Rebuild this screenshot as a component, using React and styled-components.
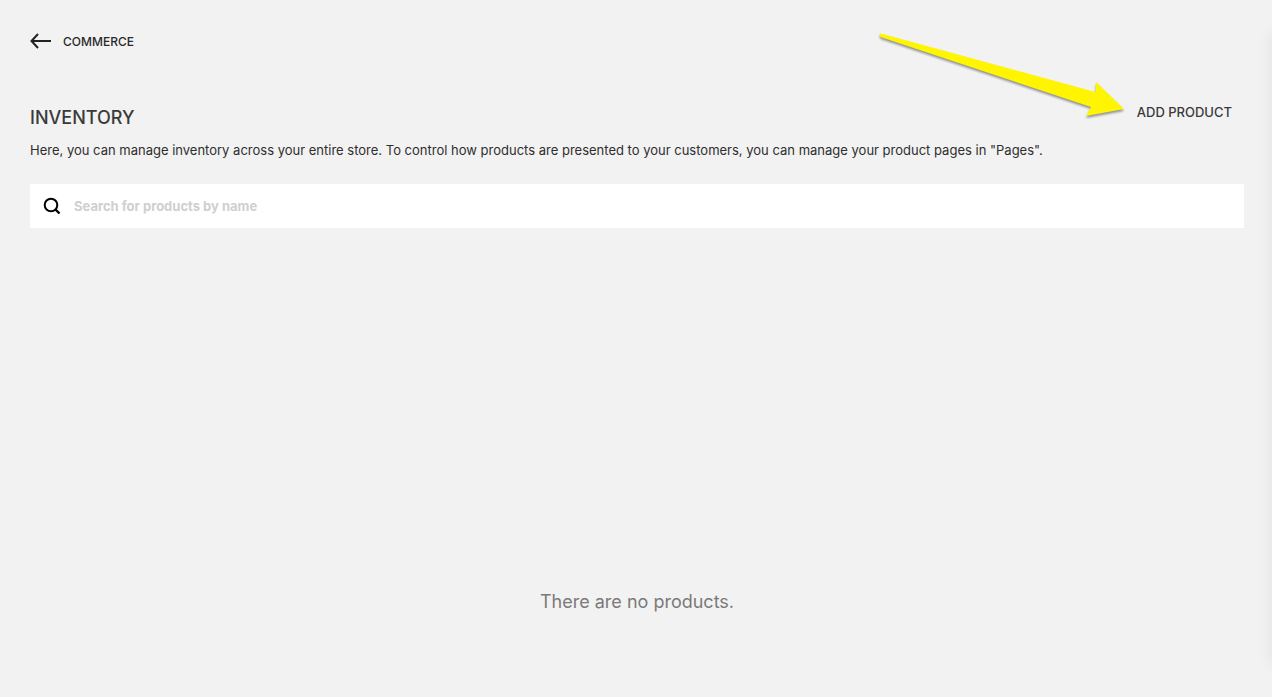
import React from "react";
import styled, { createGlobalStyle } from "styled-components";

const GlobalStyle = createGlobalStyle`
  *, *::before, *::after { box-sizing: border-box; }
  body {
    margin: 0;
    background: #f2f2f2;
    color: #3a3a3a;
    font-family: Inter, "Liberation Sans", sans-serif;
  }
`;

const Page = styled.div`
  position: relative;
  display: flex;
  flex-direction: column;
  min-height: 100vh;
  padding: 30px 28px 0 30px;
  overflow: hidden;
`;

const EdgeShadow = styled.div`
  position: absolute;
  top: 32px;
  bottom: 32px;
  left: 100%;
  width: 40px;
  box-shadow: 0 0 16px rgba(0, 0, 0, 0.08);
`;

const BackLink = styled.a`
  display: inline-flex;
  align-items: center;
  align-self: flex-start;
  gap: 11px;
  height: 22px;
  color: #2a2a2a;
  font-size: 12px;
  font-weight: 500;
  text-decoration: none;
  text-transform: uppercase;
`;

const Header = styled.header`
  position: relative;
  display: flex;
  align-items: flex-start;
  justify-content: space-between;
  margin-top: 48px;
`;

const Title = styled.h1`
  margin: 0;
  padding-top: 6px;
  font-size: 18px;
  line-height: 24px;
  font-weight: 500;
  text-transform: uppercase;
`;

const AddButton = styled.button`
  height: 24px;
  padding: 0 12px;
  border: 0;
  background: none;
  color: inherit;
  font: inherit;
  font-size: 13px;
  font-weight: 500;
  text-transform: uppercase;
  cursor: pointer;
`;

const Pointer = styled.svg`
  position: absolute;
  top: -71px;
  right: 120px;
  pointer-events: none;
  filter: drop-shadow(0 2px 1px rgba(0, 0, 0, 0.4));
`;

const Description = styled.p`
  margin: 10px 0 0;
  color: #2e2e2e;
  font-size: 13px;
  line-height: 20px;
`;

const SearchBar = styled.label`
  display: flex;
  align-items: center;
  gap: 12px;
  height: 44px;
  margin-top: 24px;
  padding: 0 13px;
  background: #fff;
`;

const SearchInput = styled.input`
  flex: 1;
  min-width: 0;
  height: 100%;
  padding: 0;
  border: 0;
  outline: 0;
  background: none;
  color: #3a3a3a;
  font: inherit;
  font-size: 13px;
  font-weight: 700;
  &::placeholder { color: #cfcfcf; opacity: 1; }
`;

const EmptyState = styled.p`
  margin: 0;
  padding: 362px 0 80px;
  color: #7a7a7a;
  font-size: 18px;
  line-height: 24px;
  text-align: center;
`;

export default function App() {
  return (
    <Page>
      <GlobalStyle />
      <BackLink href="#commerce">
        <svg width="22" height="16" viewBox="0 0 22 16" fill="none" stroke="#222" strokeWidth="2" aria-hidden="true">
          <path d="M21 8H1.5M8 1L1.5 8L8 15" />
        </svg>
        Commerce
      </BackLink>
      <main>
        <Header>
          <Title>Inventory</Title>
          <AddButton type="button">Add product</AddButton>
          <Pointer width="256" height="96" viewBox="0 0 256 96" aria-hidden="true">
            <path d="M11.5 5.5Q11 4 13 4.5L227.5 63L228 53L256 80L218 87L223 78L12.5 8Z" fill="#fff500" />
          </Pointer>
        </Header>
        <Description>
          Here, you can manage inventory across your entire store. To control how products are presented to your
          customers, you can manage your product pages in "Pages".
        </Description>
        <SearchBar>
          <svg width="19" height="18" viewBox="0 0 19 18" fill="none" stroke="#000" strokeWidth="2" aria-hidden="true">
            <circle cx="8" cy="8" r="6.3" />
            <path d="M12.5 12.5L16.5 16.5" strokeWidth="2.4" />
          </svg>
          <SearchInput type="search" aria-label="Search for products by name" placeholder="Search for products by name" />
        </SearchBar>
        <EmptyState>There are no products.</EmptyState>
      </main>
      <EdgeShadow />
    </Page>
  );
}
